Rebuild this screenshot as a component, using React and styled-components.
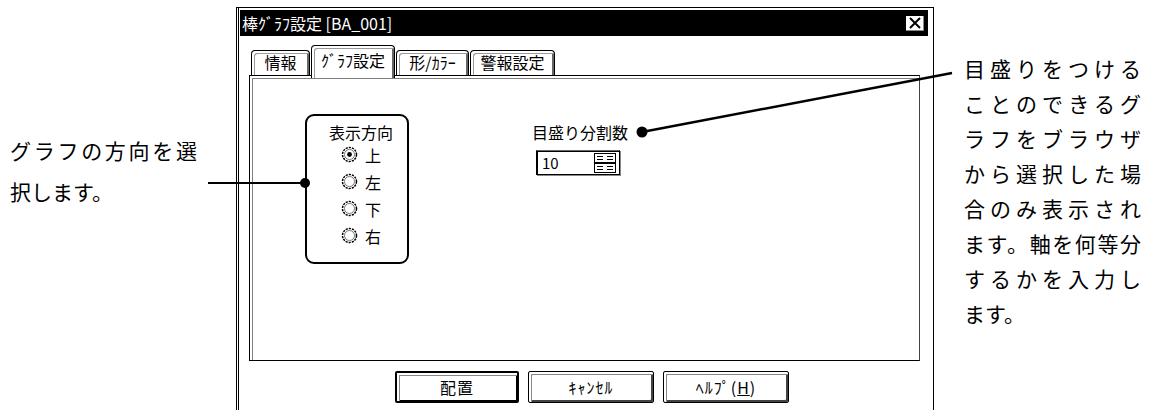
import React from "react";
import styled, { createGlobalStyle } from "styled-components";

const GlobalStyle = createGlobalStyle`
  html, body {
    margin: 0;
    padding: 0;
    background: #fff;
  }
  body {
    font-family: "Noto Sans CJK JP", "Noto Sans", sans-serif;
    color: #000;
  }
`;

const tabs = [
  { label: "情報", width: 59 },
  { label: "ｸﾞﾗﾌ設定", width: 84, active: true },
  { label: "形/ｶﾗｰ", width: 73 },
  { label: "警報設定", width: 85 },
];

const directions = ["上", "左", "下", "右"];

const leftLines = ["グラフの方向を選", "択します。"];
const rightLines = [
  "目盛りをつける",
  "ことのできるグ",
  "ラフをブラウザ",
  "から選択した場",
  "合のみ表示され",
  "ます。軸を何等分",
  "するかを入力し",
  "ます。",
];

function Radio({ checked }) {
  return (
    <svg width="17" height="17" viewBox="0 0 17 17">
      <circle cx="8.5" cy="8.5" r="7" fill="#fff" stroke="#000" strokeWidth="1.5" strokeDasharray="2.2 1" />
      <circle cx="8.5" cy="8.5" r="5" fill="none" stroke="#777" strokeWidth="1" />
      {checked && <circle cx="8.5" cy="8.5" r="2.4" fill="#000" />}
    </svg>
  );
}

function SpinIcon() {
  return (
    <svg width="22" height="20" viewBox="0 0 22 20">
      <rect x="0.5" y="0.5" width="21" height="9" fill="#fff" stroke="#000" />
      <rect x="0.5" y="10.5" width="21" height="9" fill="#fff" stroke="#000" />
      <path d="M3 3.5h6M3 6.5h6M13 3.5h6M13 6.5h6M3 13.5h6M3 16.5h6M13 13.5h6M13 16.5h6" stroke="#000" strokeWidth="1" />
    </svg>
  );
}

function App() {
  return (
    <>
      <GlobalStyle />
      <Page>
        <LeftNote>
          {leftLines.map((line, i) => (
            <NoteLine key={i} $w={187} $h={41} $last={i === leftLines.length - 1}>
              {line}
            </NoteLine>
          ))}
        </LeftNote>

        <Dialog>
          <TitleBar>
            <span>棒ｸﾞﾗﾌ設定 [BA_001]</span>
            <CloseBox>
              <svg width="14" height="12" viewBox="0 0 14 12">
                <path d="M2 1l10 10M12 1L2 11" stroke="#000" strokeWidth="2" />
              </svg>
            </CloseBox>
          </TitleBar>

          <TabStrip>
            {tabs.map((t) => (
              <Tab key={t.label} $w={t.width} $active={t.active}>
                {t.label}
              </Tab>
            ))}
          </TabStrip>

          <Panel>
            <GroupBox>
              <GroupTitle>表示方向</GroupTitle>
              {directions.map((d, i) => (
                <RadioRow key={d}>
                  <Radio checked={i === 0} />
                  <span>{d}</span>
                </RadioRow>
              ))}
            </GroupBox>

            <ScaleField>
              <FieldLabel>目盛り分割数</FieldLabel>
              <SpinInput>
                <span>10</span>
                <SpinIcon />
              </SpinInput>
            </ScaleField>
          </Panel>

          <Footer>
            <DlgButton $w={124} $default>
              配置
            </DlgButton>
            <DlgButton $w={126}>ｷｬﾝｾﾙ</DlgButton>
            <DlgButton $w={126}>
              ﾍﾙﾌﾟ(<u>H</u>)
            </DlgButton>
          </Footer>
        </Dialog>

        <RightNote>
          {rightLines.map((line, i) => (
            <NoteLine key={i} $w={177} $h={35} $last={i === rightLines.length - 1}>
              {line}
            </NoteLine>
          ))}
        </RightNote>

        <Leaders viewBox="0 0 1150 410" width="1150" height="410">
          <line x1="208" y1="183" x2="305" y2="183" stroke="#000" strokeWidth="2" />
          <circle cx="305" cy="183" r="5" fill="#000" />
          <line x1="642" y1="132" x2="952" y2="73" stroke="#000" strokeWidth="2.4" />
          <circle cx="642" cy="132" r="5.5" fill="#000" />
        </Leaders>
      </Page>
    </>
  );
}

const Page = styled.div`
  position: relative;
  width: 1150px;
  height: 410px;
  overflow: hidden;
  display: flex;
  align-items: flex-start;
`;

const LeftNote = styled.div`
  width: 236px;
  flex-shrink: 0;
  box-sizing: border-box;
  padding: 130px 0 0 10px;
`;

const RightNote = styled.div`
  margin-left: 30px;
  padding-top: 51px;
`;

const NoteLine = styled.div`
  width: ${(p) => p.$w}px;
  height: ${(p) => p.$h}px;
  line-height: ${(p) => p.$h}px;
  font-size: 21px;
  text-align: justify;
  text-align-last: ${(p) => (p.$last ? "left" : "justify")};
`;

const Dialog = styled.section`
  width: 698px;
  height: 420px;
  flex-shrink: 0;
  margin-top: 7px;
  box-sizing: border-box;
  border-top: 1px solid #000;
  border-left: 3px double #000;
  border-right: 1px solid #000;
  display: flex;
  flex-direction: column;
  font-size: 16px;
  line-height: 18px;
`;

const TitleBar = styled.div`
  height: 26px;
  margin: 2px 5px 0 1px;
  padding: 0 3px 0 2px;
  background: #000;
  color: #fff;
  display: flex;
  align-items: center;
  justify-content: space-between;
`;

const CloseBox = styled.div`
  width: 20px;
  height: 17px;
  box-sizing: border-box;
  background: #fff;
  border: 1px solid #000;
  box-shadow: inset -1px -1px 0 #888;
  display: flex;
  align-items: center;
  justify-content: center;
`;

const TabStrip = styled.div`
  height: 29px;
  margin-top: 10px;
  padding-left: 12px;
  display: flex;
  align-items: flex-end;
  gap: 1px;
  position: relative;
  z-index: 1;
`;

const Tab = styled.div`
  width: ${(p) => p.$w}px;
  height: ${(p) => (p.$active ? 33 : 25)}px;
  margin-bottom: ${(p) => (p.$active ? -3 : 0)}px;
  box-sizing: border-box;
  padding-top: ${(p) => (p.$active ? 5 : 2)}px;
  text-align: center;
  white-space: nowrap;
  background: #fff;
  border: 1px solid #000;
  border-bottom: none;
  border-radius: 4px 4px 0 0;
  box-shadow: inset 2px 2px 0 #fff, inset 3px 3px 0 #9a9a9a, inset -2px 0 0 #666;
`;

const Panel = styled.div`
  width: 671px;
  height: 286px;
  margin-left: 10px;
  box-sizing: border-box;
  border: 1px solid #000;
  border-right-color: #444;
  box-shadow: inset 2px 2px 0 #fff, inset 3px 3px 0 #808080;
  padding: 38px 0 0 55px;
  display: flex;
  align-items: flex-start;
`;

const GroupBox = styled.div`
  width: 104px;
  height: 150px;
  box-sizing: border-box;
  border: 2px solid #000;
  border-radius: 9px;
  padding-top: 7px;
`;

const GroupTitle = styled.div`
  height: 18px;
  padding-left: 8px;
  text-align: center;
`;

const RadioRow = styled.div`
  height: 27px;
  padding-left: 34px;
  display: flex;
  align-items: center;
  gap: 7px;
`;

const ScaleField = styled.div`
  margin: 9px 0 0 123px;
`;

const FieldLabel = styled.div`
  height: 18px;
  white-space: nowrap;
`;

const SpinInput = styled.div`
  width: 84px;
  height: 25px;
  margin: 9px 0 0 4px;
  box-sizing: border-box;
  border: 1px solid #000;
  border-top-color: #666;
  box-shadow: inset 1px 1px 0 #000, 1px 1px 0 #888;
  padding: 0 3px 0 5px;
  display: flex;
  align-items: center;
  justify-content: space-between;
  font-size: 15px;
`;

const Footer = styled.div`
  margin-top: 10px;
  padding-left: 156px;
  display: flex;
  gap: 9px;
`;

const DlgButton = styled.div`
  width: ${(p) => p.$w}px;
  height: 32px;
  box-sizing: border-box;
  border: ${(p) => (p.$default ? "2px" : "1px")} solid #000;
  border-radius: 2px;
  box-shadow: ${(p) =>
    p.$default
      ? "inset 2px 2px 0 #fff, inset 3px 3px 0 #888, inset -1px -1px 0 #000"
      : "inset 2px 2px 0 #fff, inset 3px 3px 0 #888, inset -2px -2px 0 #444"};
  display: flex;
  align-items: center;
  justify-content: center;
  letter-spacing: 1px;
  white-space: nowrap;

  u {
    text-decoration-thickness: 1px;
  }
`;

const Leaders = styled.svg`
  position: absolute;
  left: 0;
  top: 0;
  pointer-events: none;
`;

export default App;
